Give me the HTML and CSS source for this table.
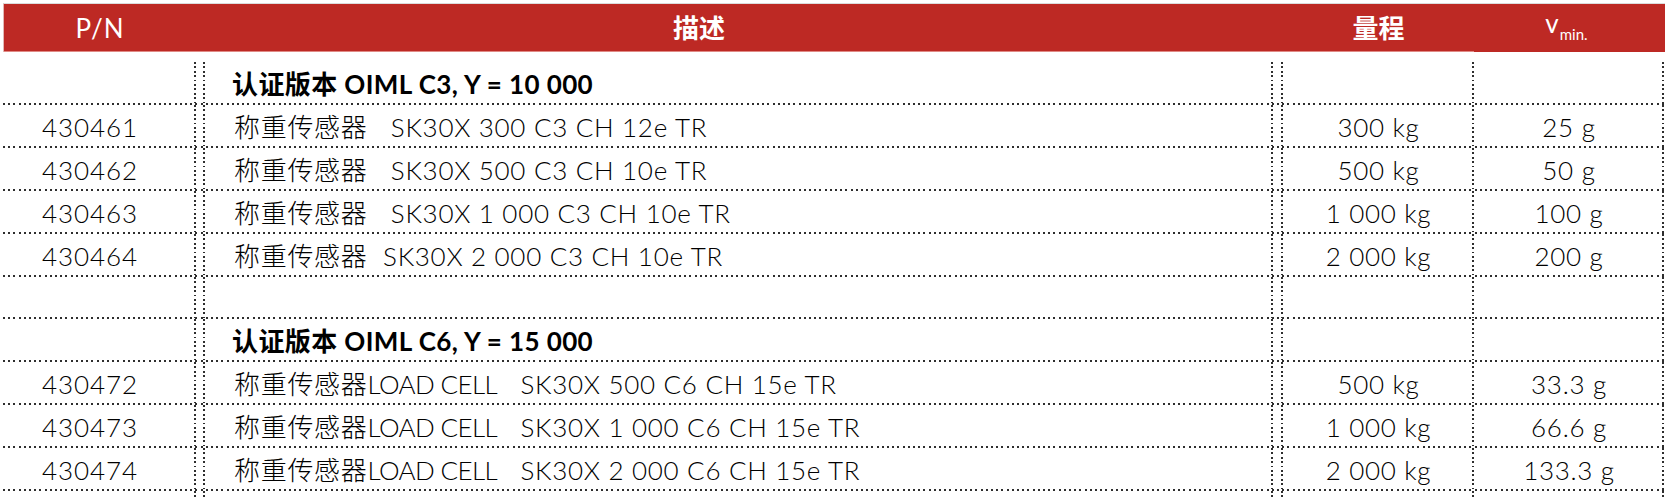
FILE: index.html
```html
<!DOCTYPE html>
<html lang="zh">
<head>
<meta charset="utf-8">
<title>SK30X</title>
<link rel="stylesheet" href="styles.css">
</head>
<body>
<div class="sheet">
  <div class="head">
    <div class="hc h-pn">P/N</div>
    <div class="hc h-desc">描述</div>
    <div class="hc h-gap"></div>
    <div class="hc h-range">量程</div>
    <div class="hc h-vmin"><span class="v">v</span><span class="sub">min.</span></div>
  </div>

  <div class="grid">
    <div class="row section">
      <div class="c pn"></div><div class="c sp"></div>
      <div class="c desc">认证版本 OIML C3, Y = 10 000</div>
      <div class="c sp"></div><div class="c rng"></div><div class="c vm"></div>
    </div>
    <div class="row">
      <div class="c pn">430461</div><div class="c sp"></div>
      <div class="c desc">称重传感器   SK30X 300 C3 CH 12e TR</div>
      <div class="c sp"></div><div class="c rng">300 kg</div><div class="c vm">25 g</div>
    </div>
    <div class="row">
      <div class="c pn">430462</div><div class="c sp"></div>
      <div class="c desc">称重传感器   SK30X 500 C3 CH 10e TR</div>
      <div class="c sp"></div><div class="c rng">500 kg</div><div class="c vm">50 g</div>
    </div>
    <div class="row">
      <div class="c pn">430463</div><div class="c sp"></div>
      <div class="c desc">称重传感器   SK30X 1 000 C3 CH 10e TR</div>
      <div class="c sp"></div><div class="c rng">1 000 kg</div><div class="c vm">100 g</div>
    </div>
    <div class="row">
      <div class="c pn">430464</div><div class="c sp"></div>
      <div class="c desc">称重传感器  SK30X 2 000 C3 CH 10e TR</div>
      <div class="c sp"></div><div class="c rng">2 000 kg</div><div class="c vm">200 g</div>
    </div>
    <div class="row blank">
      <div class="c pn"></div><div class="c sp"></div><div class="c desc"></div>
      <div class="c sp"></div><div class="c rng"></div><div class="c vm"></div>
    </div>
    <div class="row section">
      <div class="c pn"></div><div class="c sp"></div>
      <div class="c desc">认证版本 OIML C6, Y = 15 000</div>
      <div class="c sp"></div><div class="c rng"></div><div class="c vm"></div>
    </div>
    <div class="row">
      <div class="c pn">430472</div><div class="c sp"></div>
      <div class="c desc">称重传感器<span class="lc">LOAD CELL</span>   SK30X 500 C6 CH 15e TR</div>
      <div class="c sp"></div><div class="c rng">500 kg</div><div class="c vm">33.3 g</div>
    </div>
    <div class="row">
      <div class="c pn">430473</div><div class="c sp"></div>
      <div class="c desc">称重传感器<span class="lc">LOAD CELL</span>   SK30X 1 000 C6 CH 15e TR</div>
      <div class="c sp"></div><div class="c rng">1 000 kg</div><div class="c vm">66.6 g</div>
    </div>
    <div class="row">
      <div class="c pn">430474</div><div class="c sp"></div>
      <div class="c desc">称重传感器<span class="lc">LOAD CELL</span>   SK30X 2 000 C6 CH 15e TR</div>
      <div class="c sp"></div><div class="c rng">2 000 kg</div><div class="c vm">133.3 g</div>
    </div>
    <div class="row tail">
      <div class="c pn"></div><div class="c sp"></div><div class="c desc"></div>
      <div class="c sp"></div><div class="c rng"></div><div class="c vm"></div>
    </div>
  </div>
</div>
</body>
</html>
```

FILE: styles.css
```css
html, body {
  margin: 0;
  padding: 0;
  background: #ffffff;
}

body {
  width: 1665px;
  height: 498px;
  overflow: hidden;
  font-family: Lato, "Noto Sans CJK SC", sans-serif;
  font-size: 26px;
  font-weight: 300;
  color: #000000;
}

.sheet {
  display: flex;
  flex-direction: column;
}

/* ---------- header band ---------- */
.head {
  display: grid;
  grid-template-columns: 192px 1006px 81px 191px 1fr;
  margin: 3px 0 0 3px;
  border-top: 1px solid #dcdcdc;
  border-left: 1px solid #e2b7b4;
  height: 48px;
}

.hc {
  background: #bd2924;
  color: #ffffff;
  display: flex;
  align-items: center;
  justify-content: center;
  line-height: 1;
  border-bottom: 1px solid #e08a85;
}

.h-vmin {
  border-bottom: none;
}

.h-desc,
.h-range {
  font-weight: 700;
}

.h-pn {
  font-weight: 400;
  letter-spacing: 1px;
}

.h-vmin .v {
  position: relative;
  top: -5px;
  left: -3px;
  font-size: 26px;
  font-weight: 400;
}

.h-vmin .sub {
  position: relative;
  top: 6px;
  left: -3px;
  font-size: 15px;
  font-weight: 400;
  margin-left: 1px;
}

/* ---------- body grid ---------- */
.grid {
  display: flex;
  flex-direction: column;
  margin-top: 10px;
}

.row {
  display: grid;
  grid-template-columns: 196px 9px 1068px 10px 191px 190px;
  height: 43px;
  background-image: repeating-linear-gradient(90deg, #2e2e2e 0 2px, transparent 2px 5.2px);
  background-size: calc(100% - 3px) 2px;
  background-position: 3px bottom;
  background-repeat: no-repeat;
}

.row.blank {
  height: 42px;
}

.row.tail {
  height: 8px;
  background-image: none;
}

.c {
  display: flex;
  align-items: center;
  white-space: pre;
  line-height: 1;
  letter-spacing: 0.7px;
  background-image: repeating-linear-gradient(180deg, #2e2e2e 0 1.8px, transparent 1.8px 4.4px);
  background-size: 2px 100%;
  background-position: right top;
  background-repeat: no-repeat;
}

.pn {
  padding-left: 42px;
  letter-spacing: 0.9px;
}

.desc {
  padding-left: 29px;
}

.desc .lc {
  letter-spacing: -0.6px;
}

.section .desc {
  font-weight: 700;
  padding-left: 27px;
  letter-spacing: 0.4px;
}

.rng,
.vm {
  justify-content: center;
}
```
